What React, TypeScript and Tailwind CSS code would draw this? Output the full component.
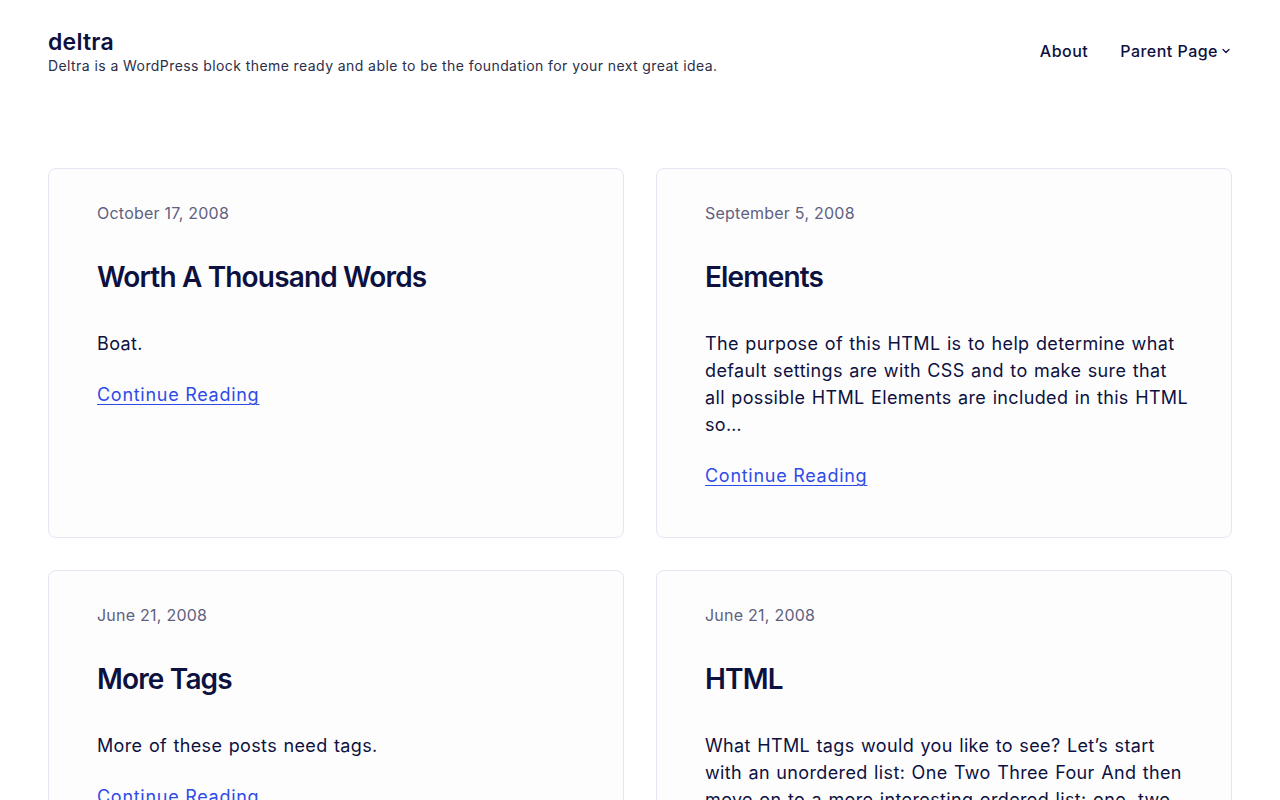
import { ChevronDown } from "lucide-react";

type Post = {
  date: string;
  title: string;
  excerpt: string;
};

const posts: Post[] = [
  { date: "October 17, 2008", title: "Worth A Thousand Words", excerpt: "Boat." },
  {
    date: "September 5, 2008",
    title: "Elements",
    excerpt:
      "The purpose of this HTML is to help determine what default settings are with CSS and to make sure that all possible HTML Elements are included in this HTML so…",
  },
  { date: "June 21, 2008", title: "More Tags", excerpt: "More of these posts need tags." },
  {
    date: "June 21, 2008",
    title: "HTML",
    excerpt:
      "What HTML tags would you like to see? Let’s start with an unordered list: One Two Three Four And then move on to a more interesting ordered list: one, two, three…",
  },
];

const PostCard = ({ post }: { post: Post }) => (
  <article className="rounded-lg border border-[#e4e6f1] bg-[#fdfdfe] pt-8 pr-[41px] pb-12 pl-12">
    <div className="text-[16px] leading-6 tracking-[0.015em] text-[#5f6180]">{post.date}</div>
    <h2 className="mt-[35px] text-[28px] font-semibold leading-[34px] tracking-[-0.03em] text-[#0d1140]">
      {post.title}
    </h2>
    <p className="mt-[36px] text-[18px] leading-[27px] tracking-[0.02em] [word-spacing:1px] text-[#0d1140]">
      {post.excerpt}
    </p>
    <a
      href="#"
      className="mt-6 block w-fit text-[18px] leading-[27px] tracking-[0.04em] text-[#2f4be8] underline decoration-1 underline-offset-[3px]"
    >
      Continue Reading
    </a>
  </article>
);

export default function App() {
  return (
    <div className="min-h-screen bg-white font-['Inter',sans-serif] text-[#0d1140]">
      <header className="flex items-start justify-between px-12 pt-[28px]">
        <div>
          <div className="text-[23px] font-semibold leading-[28px] tracking-[0.01em]">deltra</div>
          <div className="text-[14px] leading-[20px] tracking-[0.03em] text-[#2b2e4a]">
            Deltra is a WordPress block theme ready and able to be the foundation for your next great idea.
          </div>
        </div>
        <nav className="flex items-center gap-8 pt-[11px] text-[16px] font-medium tracking-[0.03em]">
          <a href="#">About</a>
          <a href="#" className="flex items-center">
            Parent Page
            <ChevronDown className="ml-[2px] h-3 w-3" strokeWidth={2.5} />
          </a>
        </nav>
      </header>

      <main className="grid grid-cols-2 gap-8 px-12 pt-[92px] pb-12">
        {posts.map((post) => (
          <PostCard key={post.title} post={post} />
        ))}
      </main>
    </div>
  );
}
